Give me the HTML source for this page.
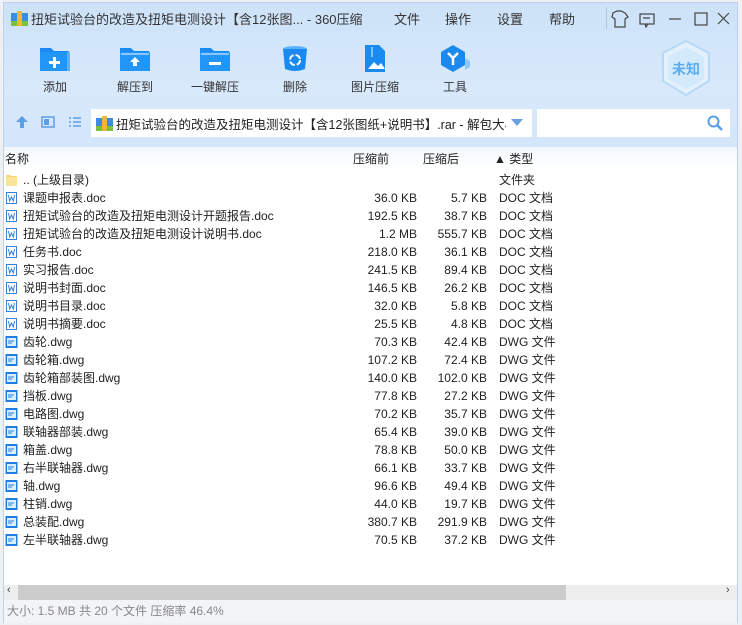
<!DOCTYPE html>
<html><head><meta charset="utf-8"><style>
*{margin:0;padding:0;box-sizing:border-box}
body{width:742px;height:625px;background:#eef0f3;position:relative;overflow:hidden;font-family:"Liberation Sans","Noto Sans CJK SC",sans-serif;font-size:12px;color:#222}
.win{position:absolute;left:3px;top:2px;width:735px;height:621px;background:#fff;border:1px solid #b9d3ee}
.head{position:absolute;left:0;top:0;width:733px;height:144px;background:linear-gradient(#cde2f8,#d8e9fb 60%,#d3e6fa)}
.a{position:absolute;white-space:nowrap}
.tb{position:absolute;top:42px;width:80px;text-align:center}
.tb svg{display:block;margin:0 auto}
.tb span{display:block;margin-top:6px;font-size:12px;color:#333}
.row{position:absolute;left:0;height:18px;width:733px;line-height:18px}
.row .n{position:absolute;left:19px}
.row .b{position:absolute;right:320px;text-align:right}
.row .c{position:absolute;right:250px;text-align:right}
.row .t{position:absolute;left:495px}
.ic{position:absolute;left:1px;top:2px;width:13px;height:14px}
</style></head><body>
<div class="win">
<div class="head">
 <svg class="a" style="left:7px;top:8px" width="17" height="16"><rect x="0" y="2" width="17" height="13" fill="#3b8de0"/><rect x="0" y="10" width="17" height="5" fill="#7cc043"/><rect x="6" y="0" width="5" height="15" fill="#f1b632"/></svg>
 <div class="a" style="left:27px;top:6px;font-size:13px;color:#333">扭矩试验台的改造及扭矩电测设计【含12张图... - 360压缩</div>
 <div class="a" style="left:390px;top:6px;font-size:13px;color:#333">文件</div>
 <div class="a" style="left:441px;top:6px;font-size:13px;color:#333">操作</div>
 <div class="a" style="left:493px;top:6px;font-size:13px;color:#333">设置</div>
 <div class="a" style="left:545px;top:6px;font-size:13px;color:#333">帮助</div>
 <div class="a" style="left:602px;top:4px;width:1px;height:22px;background:#b5c9de"></div>
 <svg class="a" style="left:603px;top:6px" width="130" height="20" fill="none" stroke="#444" stroke-width="1.2"><path d="M6 4l4-2h4l4 2 3 4-3 2v8H8v-8l-3-2z"/><rect x="33" y="5" width="14" height="10"/><path d="M36 9h7M38 15l1 3 2-3"/><path d="M62 10h12"/><rect x="88" y="4" width="12" height="12"/><path d="M111 4l11 11M122 4l-11 11"/></svg>
 <div class="tb" style="left:11px"><svg width="32" height="27"><path d="M1 3h11l3 3h15v20H1z" fill="#1a8af0"/><rect x="1" y="7" width="29" height="19" fill="#2196f6"/><rect x="28" y="7" width="3" height="19" fill="#5cb0f8"/><path d="M14 12h3v4h4v3h-4v4h-3v-4h-4v-3h4z" fill="#fff"/></svg><span>添加</span></div>
 <div class="tb" style="left:91px"><svg width="32" height="27"><path d="M1 3h11l3 3h15v20H1z" fill="#1a8af0"/><rect x="1" y="7" width="30" height="19" fill="#2196f6"/><rect x="2" y="8" width="28" height="2" fill="#8cc6fa"/><path d="M16 12l5 5h-3v4h-4v-4h-3z" fill="#fff"/></svg><span>解压到</span></div>
 <div class="tb" style="left:171px"><svg width="32" height="27"><path d="M1 3h11l3 3h15v20H1z" fill="#1a8af0"/><rect x="1" y="7" width="30" height="19" fill="#2196f6"/><rect x="2" y="8" width="28" height="2" fill="#8cc6fa"/><rect x="10" y="17" width="12" height="3" fill="#fff"/></svg><span>一键解压</span></div>
 <div class="tb" style="left:251px"><svg width="32" height="27"><ellipse cx="16" cy="4" rx="12" ry="3" fill="#5db2fa"/><path d="M4 4h24l-2 20q-10 4-20 0z" fill="#1a8af0"/><circle cx="16" cy="15" r="5" fill="none" stroke="#fff" stroke-width="2" stroke-dasharray="6 2"/></svg><span>删除</span></div>
 <div class="tb" style="left:331px"><svg width="32" height="27"><path d="M6 0h14l6 6v21H6z" fill="#1a8af0"/><path d="M9 24l6-7 4 4 3-3 4 6z" fill="#fff"/><rect x="12" y="2" width="2" height="10" fill="#7cc2fb"/></svg><span>图片压缩</span></div>
 <div class="tb" style="left:411px"><svg width="34" height="27"><path d="M15 0l12 7v13l-12 7-12-7V7z" fill="#1a8af0"/><path d="M27 13l5 3v6l-5 3z" fill="#8cc6fa"/><path d="M10 8l5 5 5-5M15 13v7" stroke="#fff" stroke-width="2.5" fill="none"/></svg><span>工具</span></div>
 <svg class="a" style="left:656px;top:36px" width="52" height="60"><path d="M26 2l23 12v28L26 56 3 42V14z" fill="#e4f1fd" stroke="#b5d9f7" stroke-width="2"/><path d="M26 8l18 10v22L26 50 8 40V18z" fill="#d3e9fc"/><text x="26" y="35" text-anchor="middle" font-size="14" font-weight="bold" fill="#5aaef0" font-family="Noto Sans CJK SC,sans-serif">未知</text></svg>
 <svg class="a" style="left:10px;top:111px" width="80" height="16"><path d="M8 2l6 6h-4v6H6V8H2z" fill="#5d9ee8"/><rect x="28" y="3" width="12" height="10" fill="none" stroke="#5d9ee8" stroke-width="1.5"/><rect x="30" y="5" width="5" height="6" fill="#5d9ee8"/><path d="M55 4h2M55 8h2M55 12h2M59 4h8M59 8h8M59 12h8" stroke="#5d9ee8" stroke-width="1.5"/></svg>
 <div class="a" style="left:87px;top:106px;width:441px;height:28px;background:#fff"></div>
 <svg class="a" style="left:92px;top:113px" width="17" height="16"><rect x="0" y="2" width="17" height="13" fill="#3b8de0"/><rect x="0" y="10" width="17" height="5" fill="#7cc043"/><rect x="6" y="0" width="5" height="15" fill="#f1b632"/></svg>
 <div class="a" style="left:112px;top:111px;font-size:12.5px;width:390px;overflow:hidden">扭矩试验台的改造及扭矩电测设计【含12张图纸+说明书】.rar - 解包大小</div>
 <svg class="a" style="left:507px;top:116px" width="12" height="8"><path d="M0 0h12L6 7z" fill="#6a9fe0"/></svg>
 <div class="a" style="left:533px;top:106px;width:193px;height:28px;background:#fff"></div>
 <svg class="a" style="left:703px;top:112px" width="16" height="16"><circle cx="6.5" cy="6.5" r="5" fill="none" stroke="#5d9ee8" stroke-width="2"/><path d="M10 10l5 5" stroke="#5d9ee8" stroke-width="2.5"/></svg>
</div>
<div class="a" style="left:0;top:144px;width:733px;height:22px;background:linear-gradient(#f3f8fe,#fff)"></div>
<div class="a" style="left:1px;top:147px">名称</div>
<div class="a" style="left:349px;top:147px">压缩前</div>
<div class="a" style="left:419px;top:147px">压缩后</div>
<div class="a" style="left:490px;top:147px">▲ 类型</div>
<div id="list"></div>
<div class="a" style="left:0;top:582px;width:733px;height:15px;background:#eeeeee"></div>
<div class="a" style="left:14px;top:582px;width:548px;height:15px;background:#cccccc"></div>
<div class="a" style="left:3px;top:581px;font-size:11px;color:#444">‹</div>
<div class="a" style="left:722px;top:581px;font-size:11px;color:#444">›</div>
<div class="a" style="left:0;top:597px;width:733px;height:23px;background:#f3f4f8;color:#888;font-size:12px;line-height:23px;padding-left:3px">大小: 1.5 MB 共 20 个文件 压缩率 46.4%</div>
</div>
<script>
var d=[["课题申报表.doc","36.0 KB","5.7 KB",0],["扭矩试验台的改造及扭矩电测设计开题报告.doc","192.5 KB","38.7 KB",0],["扭矩试验台的改造及扭矩电测设计说明书.doc","1.2 MB","555.7 KB",0],["任务书.doc","218.0 KB","36.1 KB",0],["实习报告.doc","241.5 KB","89.4 KB",0],["说明书封面.doc","146.5 KB","26.2 KB",0],["说明书目录.doc","32.0 KB","5.8 KB",0],["说明书摘要.doc","25.5 KB","4.8 KB",0],["齿轮.dwg","70.3 KB","42.4 KB",1],["齿轮箱.dwg","107.2 KB","72.4 KB",1],["齿轮箱部装图.dwg","140.0 KB","102.0 KB",1],["挡板.dwg","77.8 KB","27.2 KB",1],["电路图.dwg","70.2 KB","35.7 KB",1],["联轴器部装.dwg","65.4 KB","39.0 KB",1],["箱盖.dwg","78.8 KB","50.0 KB",1],["右半联轴器.dwg","66.1 KB","33.7 KB",1],["轴.dwg","96.6 KB","49.4 KB",1],["柱销.dwg","44.0 KB","19.7 KB",1],["总装配.dwg","380.7 KB","291.9 KB",1],["左半联轴器.dwg","70.5 KB","37.2 KB",1]];
var h='<div class="row" style="top:168px"><svg class="ic" viewBox="0 0 13 14"><path d="M1 2h4l1 1h6v10H1z" fill="#f7d675"/><rect x="1" y="4" width="11" height="9" fill="#fbe39a"/></svg><span class="n">.. (上级目录)</span><span class="t">文件夹</span></div>';
d.forEach(function(r,i){var ic=r[3]?'<svg class="ic" viewBox="0 0 13 14"><rect x="0.5" y="1" width="12" height="12" fill="#1f7de0"/><rect x="2" y="3" width="9" height="8" fill="#dbeeff"/><path d="M3 6h6M3 8h4" stroke="#1f7de0"/></svg>':'<svg class="ic" viewBox="0 0 13 14"><rect x="1.5" y="1.5" width="10" height="11" fill="#fff" stroke="#3a7fd4"/><path d="M3.5 4l1.2 6 1.8-4 1.8 4 1.2-6" stroke="#3a7fd4" fill="none"/></svg>';
h+='<div class="row" style="top:'+(186+i*18)+'px">'+ic+'<span class="n">'+r[0]+'</span><span class="b">'+r[1]+'</span><span class="c">'+r[2]+'</span><span class="t">'+(r[3]?'DWG 文件':'DOC 文档')+'</span></div>';});
document.getElementById('list').innerHTML=h;
</script>
</body></html>
